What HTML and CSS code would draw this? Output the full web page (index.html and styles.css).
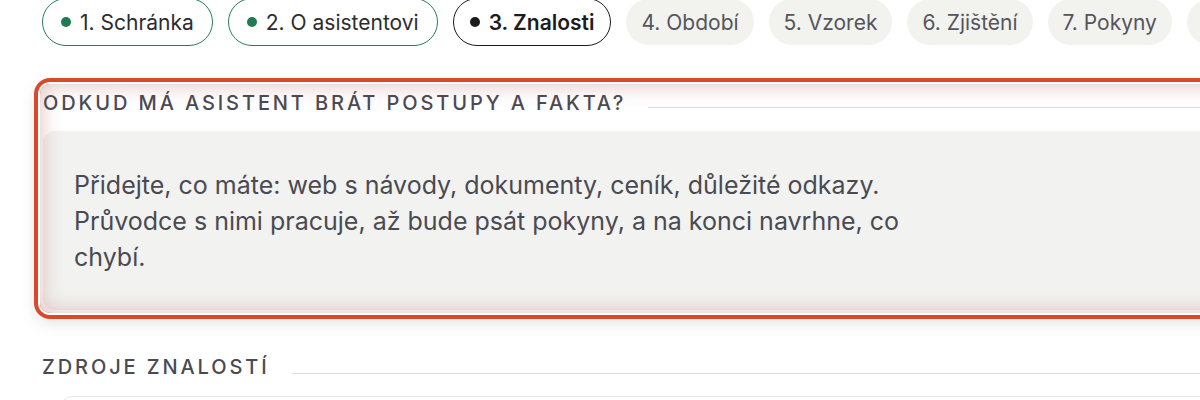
FILE: index.html
```html
<!DOCTYPE html>
<html lang="cs">
<head>
<meta charset="utf-8">
<title>Průvodce – Znalosti</title>
<link rel="stylesheet" href="styles.css">
</head>
<body>
<div class="page">
  <nav class="steps">
    <span class="step done"><span class="dot"></span>1. Schránka</span>
    <span class="step done"><span class="dot"></span>2. O asistentovi</span>
    <span class="step current"><span class="dot"></span>3. Znalosti</span>
    <span class="step todo">4. Období</span>
    <span class="step todo">5. Vzorek</span>
    <span class="step todo">6. Zjištění</span>
    <span class="step todo">7. Pokyny</span>
    <span class="step todo">8. Shrnutí</span>
  </nav>

  <section class="block highlight">
    <h2 class="section-title"><span>Odkud má asistent brát postupy a fakta?</span><span class="rule"></span></h2>
    <div class="intro-card">
      <p>Přidejte, co máte: web s návody, dokumenty, ceník, důležité odkazy. Průvodce s nimi pracuje, až bude psát pokyny, a na konci navrhne, co chybí.</p>
    </div>
  </section>

  <section class="block sources">
    <h2 class="section-title"><span>Zdroje znalostí</span><span class="rule"></span></h2>
    <div class="source-list"></div>
  </section>
</div>
</body>
</html>
```

FILE: styles.css
```css
* { box-sizing: border-box; }

html, body {
  margin: 0;
  padding: 0;
  background: #ffffff;
  overflow: hidden;
}

body {
  font-family: Inter, "Noto Sans", "Liberation Sans", sans-serif;
  color: #4a4a52;
}

.page {
  width: 1400px;
  padding: 0 0 0 42px;
  margin-top: -2px;
}

/* Steps */
.steps {
  display: flex;
  flex-wrap: nowrap;
  gap: 15px;
  align-items: center;
}

.step {
  display: inline-flex;
  align-items: center;
  gap: 9px;
  height: 48px;
  padding: 0 18px;
  border-radius: 24px;
  font-size: 21px;
  white-space: nowrap;
  color: #2b2b30;
  flex: none;
}

.step .dot {
  width: 10px;
  height: 10px;
  border-radius: 50%;
  background: #1f7a55;
}

.step.done {
  border: 1.5px solid #2a7d5b;
}

.step.current {
  border: 1.5px solid #1c1c20;
  font-weight: 600;
  color: #1c1c20;
  padding: 0 16px;
}

.step.current .dot { background: #1c1c20; }

.step.todo {
  background: #f2f2ef;
  color: #55555c;
  height: 46px;
  padding: 0 15px;
}

/* Sections */
.block {
  position: relative;
}

.highlight {
  margin-top: 38px;
  margin-left: -2px;
  padding: 7px 0 3px 3px;
  border-radius: 10px;
  box-shadow: 0 0 0 2px #ffffff, 0 0 0 6px #d9482b, 0 5px 16px 4px rgba(0, 0, 0, 0.13);
}

.highlight::after {
  content: "";
  position: absolute;
  inset: 0;
  border-radius: 10px;
  pointer-events: none;
  box-shadow: inset 0 0 20px 2px rgba(165, 85, 75, 0.32);
}

.section-title {
  display: flex;
  align-items: center;
  gap: 22px;
  margin: 0;
  font-size: 20px;
  line-height: 24px;
  font-weight: 500;
  letter-spacing: 2.9px;
  text-transform: uppercase;
  color: #4a4a52;
}

.section-title > span:first-child { white-space: nowrap; }

.section-title .rule {
  flex: 1;
  height: 1px;
  margin-top: 8px;
  background: #dcdcdc;
}

.intro-card {
  margin-top: 16px;
  background: #f2f2f0;
  border-radius: 12px;
  padding: 36px 31px 35px;
}

.intro-card p {
  margin: 0;
  max-width: 835px;
  font-size: 25px;
  line-height: 36px;
  color: #4a4a52;
}

.sources {
  margin-top: 42px;
}

.sources .section-title .rule { margin-top: 12px; }

.source-list {
  margin: 17px 0 0 18px;
  height: 60px;
  border: 1px solid #e6e6e4;
  border-radius: 12px;
}
```
